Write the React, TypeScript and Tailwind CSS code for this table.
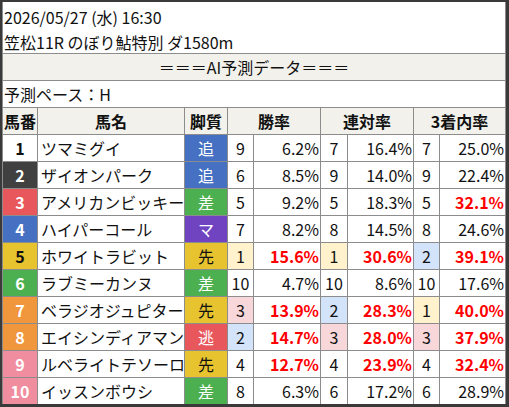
import React from "react";

type Row = {
  no: number;
  name: string;
  style: string;
  win: [number, string, boolean];
  ren: [number, string, boolean];
  fuku: [number, string, boolean];
};

const rows: Row[] = [
  { no: 1, name: "ツマミグイ", style: "追", win: [9, "6.2%", false], ren: [7, "16.4%", false], fuku: [7, "25.0%", false] },
  { no: 2, name: "ザイオンパーク", style: "追", win: [6, "8.5%", false], ren: [9, "14.0%", false], fuku: [9, "22.4%", false] },
  { no: 3, name: "アメリカンビッキー", style: "差", win: [5, "9.2%", false], ren: [5, "18.3%", false], fuku: [5, "32.1%", true] },
  { no: 4, name: "ハイパーコール", style: "マ", win: [7, "8.2%", false], ren: [8, "14.5%", false], fuku: [8, "24.6%", false] },
  { no: 5, name: "ホワイトラビット", style: "先", win: [1, "15.6%", true], ren: [1, "30.6%", true], fuku: [2, "39.1%", true] },
  { no: 6, name: "ラブミーカンヌ", style: "差", win: [10, "4.7%", false], ren: [10, "8.6%", false], fuku: [10, "17.6%", false] },
  { no: 7, name: "ベラジオジュピター", style: "先", win: [3, "13.9%", true], ren: [2, "28.3%", true], fuku: [1, "40.0%", true] },
  { no: 8, name: "エイシンディアマン", style: "逃", win: [2, "14.7%", true], ren: [3, "28.0%", true], fuku: [3, "37.9%", true] },
  { no: 9, name: "ルベライトテソーロ", style: "先", win: [4, "12.7%", true], ren: [4, "23.9%", true], fuku: [4, "32.4%", true] },
  { no: 10, name: "イッスンボウシ", style: "差", win: [8, "6.3%", false], ren: [6, "17.2%", false], fuku: [6, "28.9%", false] },
];

const noColor: Record<number, string> = {
  1: "bg-white text-[#111]",
  2: "bg-[#404040] text-white",
  3: "bg-[#e8575c] text-white",
  4: "bg-[#4670c2] text-white",
  5: "bg-[#e6c32f] text-[#111]",
  6: "bg-[#4caf50] text-white",
  7: "bg-[#f0963c] text-white",
  8: "bg-[#f0963c] text-white",
  9: "bg-[#f08d9f] text-white",
  10: "bg-[#f08d9f] text-white",
};

const styleColor: Record<string, string> = {
  追: "bg-[#4670c2] text-white",
  差: "bg-[#4caf50] text-white",
  マ: "bg-[#7044c0] text-white",
  先: "bg-[#e6c32f] text-[#111]",
  逃: "bg-[#e8575c] text-white",
};

function rankBg(r: number) {
  if (r === 1) return "bg-[#fff2cc]";
  if (r === 2) return "bg-[#d3e3fa]";
  if (r === 3) return "bg-[#f8d7da]";
  return "bg-white";
}

function Stat({ v }: { v: [number, string, boolean] }) {
  return (
    <>
      <div className={`flex items-center justify-center ${rankBg(v[0])}`}>{v[0]}</div>
      <div
        className={`flex items-center justify-end bg-white pr-px ${
          v[2] ? "font-bold text-[#ff0000]" : ""
        }`}
      >
        {v[1]}
      </div>
    </>
  );
}

export default function App() {
  return (
    <div
      className="w-[509px] h-[407px] bg-[#3a3a3a] pt-[2px] pl-[2px] pr-[3px] pb-[3px] text-[16px] text-[#111]"
      style={{ fontFamily: '"Noto Sans CJK JP", "Noto Sans", sans-serif' }}
    >
      <div className="flex flex-col gap-px bg-[#8c8c8c] px-px h-full">
        <div className="h-[51px] bg-white pt-[3px] pl-px leading-[25px] whitespace-nowrap">
          <div>2026/05/27 (水) 16:30</div>
          <div>笠松11R のぼり鮎特別 ダ1580m</div>
        </div>
        <div className="h-[26px] bg-[#f2f1ec] flex items-center justify-center">
          ＝＝＝AI予測データ＝＝＝
        </div>
        <div className="h-[26px] bg-white flex items-center pl-px">予測ペース：H</div>
        <div className="grid grid-cols-[34px_146px_42px_25px_66px_26px_65px_25px_65px] auto-rows-[26px] gap-px">
          {["馬番", "馬名", "脚質"].map((h) => (
            <div key={h} className="bg-[#f2f1ec] flex items-center justify-center font-bold whitespace-nowrap">
              {h}
            </div>
          ))}
          {["勝率", "連対率", "3着内率"].map((h) => (
            <div key={h} className="col-span-2 bg-[#f2f1ec] flex items-center justify-center font-bold">
              {h}
            </div>
          ))}
          {rows.map((r) => (
            <React.Fragment key={r.no}>
              <div className={`flex items-center justify-center font-bold ${noColor[r.no]}`}>{r.no}</div>
              <div className="flex items-center bg-white pl-[3px] whitespace-nowrap overflow-hidden">{r.name}</div>
              <div className={`flex items-center justify-center ${styleColor[r.style]}`}>{r.style}</div>
              <Stat v={r.win} />
              <Stat v={r.ren} />
              <Stat v={r.fuku} />
            </React.Fragment>
          ))}
        </div>
      </div>
    </div>
  );
}
